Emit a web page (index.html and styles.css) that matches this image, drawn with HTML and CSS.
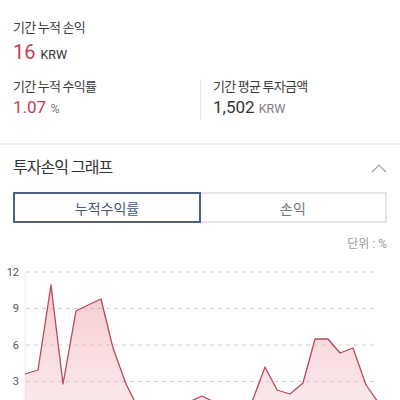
FILE: index.html
```html
<!DOCTYPE html>
<html lang="ko">
<head>
<meta charset="utf-8">
<link rel="stylesheet" href="styles.css">
</head>
<body>
<div class="summary">
  <div class="label">기간 누적 손익</div>
  <div class="value big"><span class="num red">16</span> <span class="unit dark">KRW</span></div>
  <div class="stats">
    <div class="stat">
      <div class="label small">기간 누적 수익률</div>
      <div class="value"><span class="num red">1.07</span> <span class="unit">%</span></div>
    </div>
    <div class="stat divided">
      <div class="label small">기간 평균 투자금액</div>
      <div class="value"><span class="num">1,502</span> <span class="unit">KRW</span></div>
    </div>
  </div>
</div>
<div class="sep"></div>
<div class="graph">
  <div class="graph-head">
    <div class="graph-title">투자손익 그래프</div>
    <svg class="chev" width="16" height="9" viewBox="0 0 16 9"><polyline points="1,8 8,1.2 15,8" fill="none" stroke="#9a9a9a" stroke-width="1.1"/></svg>
  </div>
  <div class="tabs">
    <div class="tab active">누적수익률</div>
    <div class="tab">손익</div>
  </div>
  <div class="unit-note">단위 : %</div>
</div>
<svg class="chart" width="400" height="148" viewBox="0 252 400 148">
  <defs>
    <linearGradient id="fillg" x1="0" y1="0" x2="0" y2="1" gradientUnits="objectBoundingBox">
      <stop offset="0" stop-color="#ee8a95" stop-opacity="0.45"/>
      <stop offset="1" stop-color="#f6c9ce" stop-opacity="0.35"/>
    </linearGradient>
  </defs>
  <line x1="25" y1="272" x2="25" y2="420" stroke="#ececec" stroke-width="1"/>
  <g stroke="#cfcfcf" stroke-width="1" stroke-dasharray="4 4">
    <line x1="26" y1="272" x2="378" y2="272"/>
    <line x1="26" y1="308.5" x2="378" y2="308.5"/>
    <line x1="26" y1="345" x2="378" y2="345"/>
    <line x1="26" y1="381.5" x2="378" y2="381.5"/>
  </g>
  <g class="ylab">
    <text x="19" y="275.5">12</text>
    <text x="19" y="312">9</text>
    <text x="19" y="348.5">6</text>
    <text x="19" y="385">3</text>
  </g>
  <path d="M25,374 L38,370 L51,285 L63,384 L76,311 L88,305 L101,299 L113,348 L126,384 L139,410 L151,412 L164,410 L177,406 L189,402 L202,396 L214,402 L227,408 L240,410 L252,402 L265,367 L277,390 L290,394 L303,383 L315,339 L328,339 L340,353 L353,348 L366,385 L378,402 L378,420 L25,420 Z" fill="url(#fillg)"/>
  <polyline points="25,374 38,370 51,285 63,384 76,311 88,305 101,299 113,348 126,384 139,410 151,412 164,410 177,406 189,402 202,396 214,402 227,408 240,410 252,402 265,367 277,390 290,394 303,383 315,339 328,339 340,353 353,348 366,385 378,402" fill="none" stroke="#b9475b" stroke-width="1.3" stroke-linejoin="round"/>
</svg>
</body>
</html>
```
FILE: styles.css
```css
html, body {
  margin: 0;
  padding: 0;
  background: #ffffff;
}
body {
  width: 400px;
  height: 400px;
  overflow: hidden;
  font-family: Roboto, "Noto Sans CJK KR", sans-serif;
  color: #333333;
}
.summary {
  padding: 19px 13px 0 13px;
}
.label {
  font-family: Roboto, "Noto Sans CJK KR", sans-serif;
  font-size: 13px;
  line-height: 18px;
  letter-spacing: -0.06em;
  color: #3a3a3a;
}
.label.small {
  line-height: 16px;
}
.value {
  margin-top: 1px;
  font-size: 17px;
  line-height: 22px;
  white-space: nowrap;
}
.value.big {
  margin-top: 2px;
  font-size: 20px;
  line-height: 26px;
}
.num {
  color: #333333;
}
.red {
  color: #c43d50;
}
.unit {
  font-size: 12.5px;
  color: #7a7a7a;
}
.unit.dark {
  color: #333333;
}
.stats {
  margin-top: 11px;
  display: grid;
  grid-template-columns: 1fr 1fr;
  padding-bottom: 3px;
}
.stat.divided {
  border-left: 1px solid #e6e6e6;
  padding-left: 12px;
}
.sep {
  margin-top: 20px;
  height: 2px;
  background: #efefef;
}
.graph {
  padding: 11px 13px 0 13px;
}
.graph-head {
  display: flex;
  justify-content: space-between;
  align-items: center;
  height: 24px;
}
.graph-title {
  font-size: 16px;
  line-height: 24px;
  letter-spacing: -0.06em;
  color: #333333;
}
.chev {
  display: block;
}
.tabs {
  margin-top: 12px;
  display: flex;
  height: 31px;
}
.tab {
  flex: 1;
  box-sizing: border-box;
  display: flex;
  align-items: center;
  justify-content: center;
  font-size: 14px;
  color: #777777;
  border: 2px solid #e6e6e6;
  border-left: none;
}
.tab.active {
  border: 2px solid #4a5f83;
  color: #3f5680;
}
.unit-note {
  margin-top: 13px;
  text-align: right;
  font-size: 12px;
  line-height: 16px;
  color: #9a9a9a;
}
.chart {
  display: block;
}
.ylab text {
  font-family: Roboto, sans-serif;
  font-size: 11px;
  fill: #555555;
  text-anchor: end;
}
```
